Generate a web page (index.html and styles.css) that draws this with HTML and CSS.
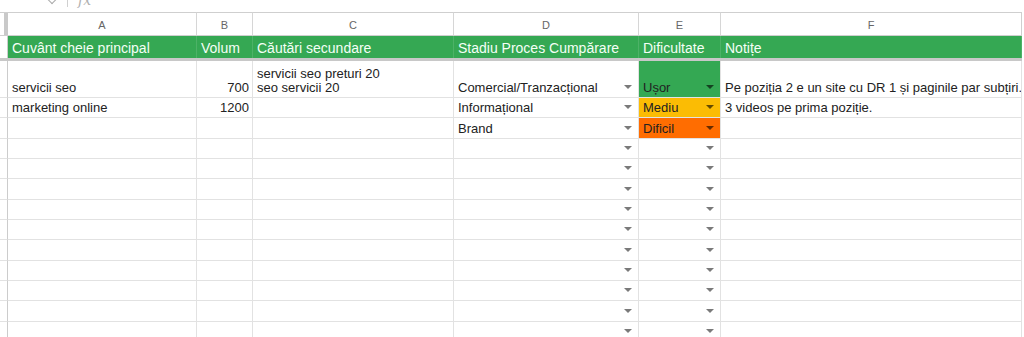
FILE: index.html
```html
<!DOCTYPE html>
<html lang="ro">
<head>
<meta charset="utf-8">
<title>Sheet</title>
<link rel="stylesheet" href="styles.css">
</head>
<body>
<div class="toolbar">
  <span class="tb-caret"></span>
  <span class="tb-divider"></span>
  <span class="tb-fx">fx</span>
</div>
<div class="viewport">
<div class="sheet">
  <!-- column letters -->
  <div class="corner"></div>
  <div class="colhead">A</div>
  <div class="colhead">B</div>
  <div class="colhead">C</div>
  <div class="colhead">D</div>
  <div class="colhead">E</div>
  <div class="colhead">F</div>

  <!-- header row -->
  <div class="gut gut-green"></div>
  <div class="hcell">Cuvânt cheie principal</div>
  <div class="hcell">Volum</div>
  <div class="hcell">Căutări secundare</div>
  <div class="hcell">Stadiu Proces Cumpărare</div>
  <div class="hcell">Dificultate</div>
  <div class="hcell">Notițe</div>

  <div class="freeze"></div>

  <!-- row 2 -->
  <div class="gut"></div>
  <div class="cell">servicii seo</div>
  <div class="cell num">700</div>
  <div class="cell multi"><span>servicii seo preturi 20</span><span>seo servicii 20</span></div>
  <div class="cell dd"><span>Comercial/Tranzacțional</span><i class="arrow"></i></div>
  <div class="cell dd easy"><span>Ușor</span><i class="arrow"></i></div>
  <div class="cell">Pe poziția 2 e un site cu DR 1 și paginile par subțiri.</div>

  <!-- row 3 -->
  <div class="gut"></div>
  <div class="cell">marketing online</div>
  <div class="cell num">1200</div>
  <div class="cell"></div>
  <div class="cell dd"><span>Informațional</span><i class="arrow"></i></div>
  <div class="cell dd medium"><span>Mediu</span><i class="arrow"></i></div>
  <div class="cell">3 videos pe prima poziție.</div>

  <!-- row 4 -->
  <div class="gut"></div>
  <div class="cell"></div>
  <div class="cell"></div>
  <div class="cell"></div>
  <div class="cell dd"><span>Brand</span><i class="arrow"></i></div>
  <div class="cell dd hard"><span>Dificil</span><i class="arrow"></i></div>
  <div class="cell"></div>

  <div class="gut"></div><div class="cell"></div><div class="cell"></div><div class="cell"></div><div class="cell dd"><span></span><i class="arrow"></i></div><div class="cell dd"><span></span><i class="arrow"></i></div><div class="cell"></div>
  <div class="gut"></div><div class="cell"></div><div class="cell"></div><div class="cell"></div><div class="cell dd"><span></span><i class="arrow"></i></div><div class="cell dd"><span></span><i class="arrow"></i></div><div class="cell"></div>
  <div class="gut"></div><div class="cell"></div><div class="cell"></div><div class="cell"></div><div class="cell dd"><span></span><i class="arrow"></i></div><div class="cell dd"><span></span><i class="arrow"></i></div><div class="cell"></div>
  <div class="gut"></div><div class="cell"></div><div class="cell"></div><div class="cell"></div><div class="cell dd"><span></span><i class="arrow"></i></div><div class="cell dd"><span></span><i class="arrow"></i></div><div class="cell"></div>
  <div class="gut"></div><div class="cell"></div><div class="cell"></div><div class="cell"></div><div class="cell dd"><span></span><i class="arrow"></i></div><div class="cell dd"><span></span><i class="arrow"></i></div><div class="cell"></div>
  <div class="gut"></div><div class="cell"></div><div class="cell"></div><div class="cell"></div><div class="cell dd"><span></span><i class="arrow"></i></div><div class="cell dd"><span></span><i class="arrow"></i></div><div class="cell"></div>
  <div class="gut"></div><div class="cell"></div><div class="cell"></div><div class="cell"></div><div class="cell dd"><span></span><i class="arrow"></i></div><div class="cell dd"><span></span><i class="arrow"></i></div><div class="cell"></div>
  <div class="gut"></div><div class="cell"></div><div class="cell"></div><div class="cell"></div><div class="cell dd"><span></span><i class="arrow"></i></div><div class="cell dd"><span></span><i class="arrow"></i></div><div class="cell"></div>
  <div class="gut"></div><div class="cell"></div><div class="cell"></div><div class="cell"></div><div class="cell dd"><span></span><i class="arrow"></i></div><div class="cell dd"><span></span><i class="arrow"></i></div><div class="cell"></div>
  <div class="gut"></div><div class="cell"></div><div class="cell"></div><div class="cell"></div><div class="cell dd"><span></span><i class="arrow"></i></div><div class="cell dd"><span></span><i class="arrow"></i></div><div class="cell"></div>
</div>
</div>
</body>
</html>
```

FILE: styles.css
```css
html, body {
  margin: 0;
  padding: 0;
  background: #ffffff;
  overflow: hidden;
}

body {
  width: 1024px;
  height: 337px;
  font-family: "Liberation Sans", Arial, sans-serif;
  color: #222222;
}

.toolbar {
  height: 12px;
  overflow: hidden;
  display: flex;
  align-items: flex-start;
  padding-left: 47px;
  box-sizing: border-box;
}

.tb-caret {
  width: 5px;
  height: 5px;
  border-right: 1px solid #aaaaaa;
  border-bottom: 1px solid #aaaaaa;
  transform: rotate(45deg);
  margin-top: -3px;
  margin-left: 2px;
}

.tb-divider {
  width: 1px;
  height: 7px;
  background: #d0d0d0;
  margin-left: 12px;
}

.tb-fx {
  font-family: "DejaVu Serif", "Liberation Serif", serif;
  font-style: italic;
  font-size: 14px;
  line-height: 14px;
  color: #b0b0b0;
  margin-left: 10px;
  margin-top: -7px;
}

.viewport {
  height: 325px;
  overflow: hidden;
}

.sheet {
  display: grid;
  grid-template-columns: 8px 189px 56px 201px 185px 82px 301px;
  grid-template-rows: 24px 22px 3px 37px repeat(13, 20.33px);
  width: 1022px;
  font-size: 13px;
}

.corner {
  border-top: 1px solid #cfcfcf;
  border-bottom: 1px solid #cfcfcf;
  background: linear-gradient(to right, #ffffff 0 4px, #c9c9c9 4px 8px);
  box-sizing: border-box;
}

.colhead {
  border-top: 1px solid #cfcfcf;
  border-right: 1px solid #d6d6d6;
  border-bottom: 1px solid #cfcfcf;
  box-sizing: border-box;
  display: flex;
  align-items: center;
  justify-content: center;
  font-size: 11px;
  color: #666666;
  padding-top: 1px;
}

.colhead:nth-child(7) {
  border-right-color: #cfcfcf;
}

.gut {
  border-right: 1px solid #cccccc;
  border-bottom: 1px solid #e2e2e2;
  box-sizing: border-box;
}

.gut-green {
  border-bottom: none;
}

.hcell {
  background: #35a853;
  color: #f4fff6;
  font-size: 14px;
  display: flex;
  align-items: center;
  padding: 1px 4px 0;
  white-space: nowrap;
  overflow: hidden;
  box-shadow: inset -1px 0 0 rgba(255, 255, 255, 0.12);
}

.freeze {
  grid-column: 1 / -1;
  background: #c8c8c8;
}

.cell {
  border-right: 1px solid #e2e2e2;
  border-bottom: 1px solid #e2e2e2;
  box-sizing: border-box;
  display: flex;
  align-items: flex-end;
  padding: 0 3px 2px 4px;
  white-space: nowrap;
  overflow: hidden;
  line-height: 15px;
}

.num {
  justify-content: flex-end;
}

.multi {
  flex-direction: column;
  align-items: flex-start;
  justify-content: flex-end;
  line-height: 14px;
}

.dd {
  justify-content: space-between;
}

.arrow {
  display: block;
  width: 0;
  height: 0;
  border-left: 4px solid transparent;
  border-right: 4px solid transparent;
  border-top: 4px solid #7a7a7a;
  margin: 0 3px 6px 0;
  flex: none;
}

.easy {
  background: #34a853;
}

.medium {
  background: #fbbc04;
}

.hard {
  background: #ff6d01;
}

.easy .arrow,
.medium .arrow,
.hard .arrow {
  border-top-color: rgba(0, 0, 0, 0.6);
}
```
